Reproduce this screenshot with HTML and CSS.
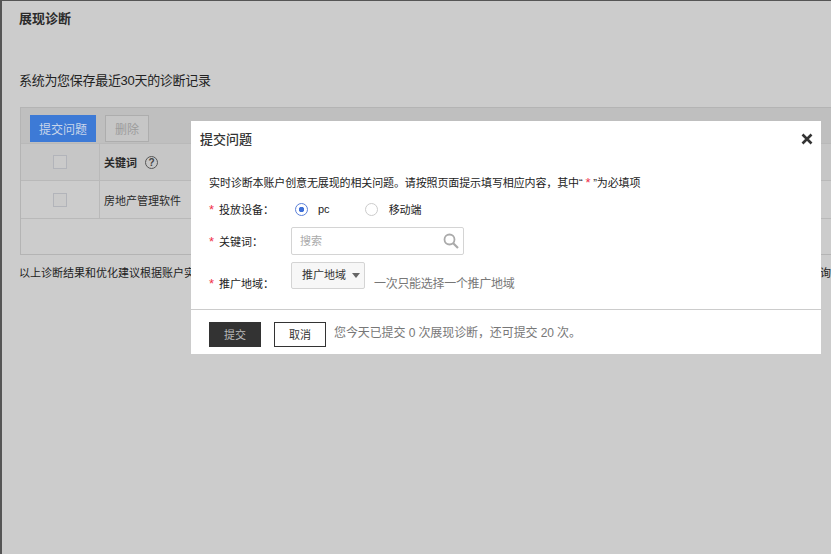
FILE: index.html
```html
<!DOCTYPE html>
<html lang="en">
<head>
  <meta charset="UTF-8">
  <title>展现诊断</title>
  <link rel="stylesheet" href="styles.css">
</head>
<body>
  <div class="page">
    <h1 class="page-title">展现诊断</h1>
    <p class="page-note">系统为您保存最近30天的诊断记录</p>

    <div class="records">
      <div class="toolbar">
        <button class="btn-blue">提交问题</button>
        <button class="btn-gray">删除</button>
      </div>
      <div class="row row-head">
        <div class="cell-check"><span class="checkbox"></span></div>
        <div class="cell-word">
          <b>关键词</b>
          <span class="help">?</span>
        </div>
      </div>
      <div class="row row-body">
        <div class="cell-check"><span class="checkbox"></span></div>
        <div class="cell-word">房地产管理软件</div>
      </div>
      <div class="row row-empty"></div>
    </div>

    <div class="page-foot">
      <span>以上诊断结果和优化建议根据账户实</span>
      <span>询</span>
    </div>
  </div>

  <div class="dialog">
    <div class="dialog-head">
      <span class="dialog-title">提交问题</span>
      <svg class="dialog-close" width="12" height="12" viewBox="0 0 12 12">
        <path d="M1.5 1.5 L10.5 10.5 M10.5 1.5 L1.5 10.5" stroke="#333" stroke-width="2.6" fill="none"/>
      </svg>
    </div>

    <div class="dialog-body">
      <p class="intro">实时诊断本账户创意无展现的相关问题。请按照页面提示填写相应内容，其中“ <i>*</i> ”为必填项</p>

      <div class="field field-device">
        <label class="field-label"><i>*</i>投放设备：</label>
        <span class="radio radio-on"></span>
        <span class="radio-text radio-text-pc">pc</span>
        <span class="radio"></span>
        <span class="radio-text">移动端</span>
      </div>

      <div class="field field-word">
        <label class="field-label"><i>*</i>关键词：</label>
        <div class="search">
          <span class="search-text">搜索</span>
          <svg width="16" height="16" viewBox="0 0 16 16">
            <circle cx="6.5" cy="6.5" r="5" stroke="#aaa" stroke-width="1.8" fill="none"/>
            <path d="M10.2 10.2 L15 15" stroke="#aaa" stroke-width="2.2"/>
          </svg>
        </div>
      </div>

      <div class="field field-region">
        <label class="field-label"><i>*</i>推广地域：</label>
        <div class="select">推广地域<span class="caret"></span></div>
        <span class="hint">一次只能选择一个推广地域</span>
      </div>
    </div>

    <div class="dialog-foot">
      <button class="btn-dark">提交</button>
      <button class="btn-line">取消</button>
      <span class="quota">您今天已提交 0 次展现诊断，还可提交 20 次。</span>
    </div>
  </div>
</body>
</html>
```

FILE: styles.css
```css
html, body {
  margin: 0;
  padding: 0;
  height: 100%;
  overflow: hidden;
}

body {
  background: #ccc;
  font-family: "Liberation Sans", "Noto Sans CJK SC", sans-serif;
  font-size: 12px;
  color: #222;
  border-top: 1px solid #555;
  border-left: 2px solid #555;
  box-sizing: border-box;
}

.page {
  padding: 10px 0 0 17px;
}

.page-title {
  margin: 0;
  font-size: 13px;
  line-height: 16px;
  font-weight: 700;
  color: #2a2a2a;
}

.page-note {
  margin: 44px 0 0;
  font-size: 13px;
  line-height: 20px;
  letter-spacing: -0.3px;
}

.records {
  margin: 16px 0 0 1px;
  border: 1px solid #b4b4b4;
  border-right: 0;
}

.toolbar {
  height: 35px;
  box-sizing: border-box;
  background: #bfbfbf;
  padding-top: 7px;
  display: flex;
  gap: 9px;
  padding-left: 9px;
}

.toolbar button {
  font-family: inherit;
  font-size: 12px;
  height: 27px;
  padding: 0;
  cursor: pointer;
}

.btn-blue {
  width: 66px;
  background: #3d7ad6;
  color: #c9d6ea;
  border: none;
}

.btn-gray {
  width: 44px;
  background: #c6c6c6;
  color: #9c9c9c;
  border: 1px solid #adadad;
}

.row {
  display: flex;
  border-top: 1px solid #b9b9b9;
  box-sizing: border-box;
}

.row-head {
  height: 37px;
  background: #c6c6c6;
}

.row-body {
  height: 38px;
}

.row-empty {
  height: 36px;
}

.cell-check {
  width: 78px;
  border-right: 1px solid #b9b9b9;
  display: flex;
  align-items: center;
  justify-content: center;
}

.cell-word {
  padding-left: 4px;
  display: flex;
  align-items: center;
  gap: 8px;
  font-size: 11px;
  color: #2a2a2a;
}

.checkbox {
  width: 12px;
  height: 12px;
  border: 1px solid #b2b4ba;
  background: #cacaca;
}

.help {
  width: 11px;
  height: 11px;
  border: 1.5px solid #555;
  border-radius: 50%;
  font-size: 10px;
  font-weight: 700;
  line-height: 11px;
  text-align: center;
  color: #444;
}

.page-foot {
  margin: 8px 0 0;
  line-height: 20px;
  white-space: nowrap;
  font-size: 11px;
  display: flex;
  justify-content: space-between;
}

/* dialog sits over the page */
.dialog {
  position: absolute;
  left: 191px;
  top: 121px;
  width: 630px;
  height: 233px;
  background: #fff;
  display: flex;
  flex-direction: column;
}

.dialog-head {
  height: 35px;
  display: flex;
  align-items: center;
  justify-content: space-between;
  padding: 0 8px 0 9px;
}

.dialog-title {
  font-size: 13px;
  color: #333;
  font-weight: 500;
}

.dialog-body {
  flex: 1;
  padding-left: 18px;
}

.intro {
  margin: 19px 0 0;
  font-size: 11px;
  line-height: 16px;
  letter-spacing: -0.12px;
  color: #222;
}

i {
  font-style: normal;
  font-size: 13px;
  line-height: 1;
  color: #f0304a;
}

.field {
  display: flex;
  font-size: 11px;
}

.field-label {
  width: 82px;
  flex: none;
  color: #222;
}

.field-label i {
  margin-right: 5px;
}

.field-device {
  margin-top: 8px;
  height: 20px;
  align-items: center;
}

.radio {
  width: 11px;
  height: 11px;
  border: 1px solid #ccc;
  border-radius: 50%;
  margin-left: 4px;
}

.radio-on {
  border-color: #5b7fd8;
  background: radial-gradient(circle, #3d6fd8 2.5px, #fff 3px);
}

.radio-text {
  margin-left: 11px;
}

.radio-text-pc {
  margin-left: 10px;
  margin-right: 31px;
}

.field-word {
  margin-top: 8px;
  height: 28px;
  align-items: center;
}

.search {
  width: 159px;
  height: 26px;
  border: 1px solid #d4d4d4;
  border-radius: 2px;
  display: flex;
  align-items: center;
  justify-content: space-between;
  padding: 0 4px 0 8px;
  color: #aaa;
}

.search-text {
  margin-bottom: 2px;
}

.field-region {
  margin-top: 7px;
  height: 28px;
}

.field-region .field-label {
  padding-top: 14px;
  line-height: 16px;
}

.select {
  width: 74px;
  height: 27px;
  border: 1px solid #d4d4d4;
  border-radius: 2px;
  background: #f7f7f7;
  line-height: 24px;
  padding-left: 10px;
  box-sizing: border-box;
  position: relative;
  color: #333;
}

.caret {
  position: absolute;
  right: 4px;
  top: 10px;
  border: 4px solid transparent;
  border-top: 5px solid #666;
  border-bottom: 0;
}

.hint {
  margin: 14px 0 0 9px;
  line-height: 16px;
  font-size: 12px;
  letter-spacing: -0.3px;
  color: #777;
}

.dialog-foot {
  height: 45px;
  box-sizing: border-box;
  border-top: 1px solid #ccc;
  display: flex;
  align-items: center;
  padding: 4px 0 0 18px;
}

.dialog-foot button {
  font-family: inherit;
  font-size: 11px;
  width: 52px;
  height: 25px;
  padding: 0;
  cursor: pointer;
}

.btn-dark {
  background: #333;
  color: #bbb;
  border: none;
}

.btn-line {
  background: #fff;
  color: #333;
  border: 1px solid #333;
  margin-left: 13px;
}

.quota {
  margin: 0 0 6px 8px;
  letter-spacing: -0.1px;
  color: #777;
  font-size: 12px;
}
```
